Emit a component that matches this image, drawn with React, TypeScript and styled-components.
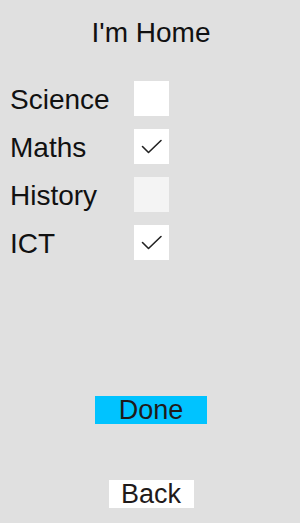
import { useState } from 'react';
import styled, { createGlobalStyle } from 'styled-components';

const subjects = [
  { name: 'Science', checked: false, disabled: false },
  { name: 'Maths', checked: true, disabled: false },
  { name: 'History', checked: false, disabled: true },
  { name: 'ICT', checked: true, disabled: false }
];

const App = () => {
  const [checked, setChecked] = useState<boolean[]>(
    subjects.map((s) => s.checked)
  );

  const toggle = (index: number) => {
    setChecked((prev) => prev.map((v, i) => (i === index ? !v : v)));
  };

  return (
    <>
      <GlobalStyle />
      <Page>
        <Title>I'm Home</Title>
        <SubjectList>
          {subjects.map((subject, index) => (
            <SubjectRow key={subject.name}>
              <SubjectLabel>{subject.name}</SubjectLabel>
              <CheckBox
                type="button"
                disabled={subject.disabled}
                onClick={() => toggle(index)}
              >
                {checked[index] && <CheckMark />}
              </CheckBox>
            </SubjectRow>
          ))}
        </SubjectList>
        <Actions>
          <DoneButton type="button">Done</DoneButton>
          <BackButton type="button">Back</BackButton>
        </Actions>
      </Page>
    </>
  );
};

export default App;

const GlobalStyle = createGlobalStyle`
  body {
    margin: 0;
    background-color: #e0e0e0;
    font-family: 'Liberation Sans', Arial, sans-serif;
  }
`;

const Page = styled.div`
  width: 300px;
  height: 523px;
  display: flex;
  flex-direction: column;
  color: #111;
  overflow: hidden;
`;

const Title = styled.h1`
  margin: 16.5px 0 0 2px;
  font-size: 28px;
  line-height: 32px;
  font-weight: 400;
  text-align: center;
`;

const SubjectList = styled.div`
  display: flex;
  flex-direction: column;
  margin-top: 26px;
  padding-left: 10px;
`;

const SubjectRow = styled.div`
  height: 48px;
  display: grid;
  grid-template-columns: 124px 35px;
  align-items: start;
`;

const SubjectLabel = styled.span`
  padding-top: 1px;
  font-size: 28px;
  line-height: 48px;
`;

const CheckBox = styled.button`
  width: 35px;
  height: 35px;
  margin-top: 6.5px;
  padding: 0;
  border: none;
  background-color: #ffffff;
  display: flex;
  align-items: center;
  justify-content: center;
  cursor: pointer;
  &:disabled {
    background-color: #f4f4f4;
    cursor: default;
  }
`;

const CheckMark = () => (
  <svg width="22" height="16" viewBox="0 0 22 16" fill="none">
    <path
      d="M1.5 7.5 L7.5 13.5 L20 1.5"
      stroke="#222"
      strokeWidth="1.6"
      strokeLinecap="round"
      strokeLinejoin="round"
    />
  </svg>
);

const Actions = styled.div`
  display: flex;
  flex-direction: column;
  align-items: center;
  margin-top: 129.5px;
  padding-left: 2px;
`;

const BaseButton = styled.button`
  height: 28px;
  padding: 0;
  border: none;
  font-family: 'Liberation Sans', Arial, sans-serif;
  font-size: 27px;
  line-height: 28px;
  color: #1f1a1a;
  cursor: pointer;
`;

const DoneButton = styled(BaseButton)`
  width: 112px;
  background-color: #00c3ff;
`;

const BackButton = styled(BaseButton)`
  width: 85px;
  margin-top: 56px;
  background-color: #ffffff;
`;
